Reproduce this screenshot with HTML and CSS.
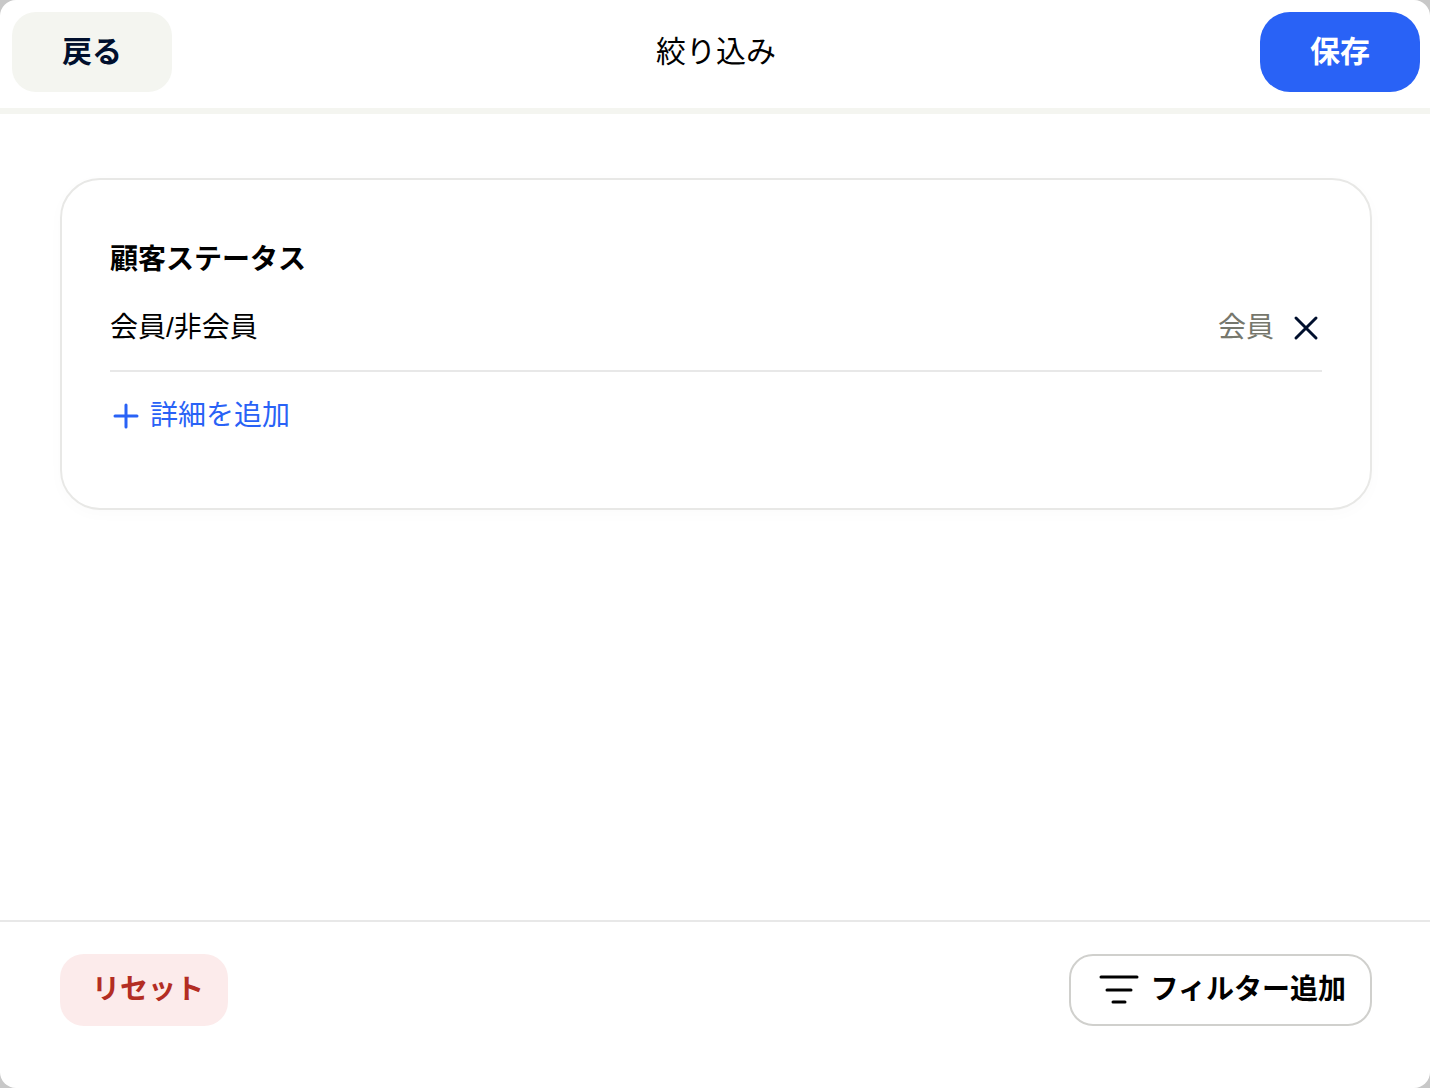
FILE: index.html
```
<!DOCTYPE html>
<html lang="ja">
<head>
  <meta charset="UTF-8">
  <meta name="viewport" content="width=device-width, initial-scale=1.0">
  <title>絞り込み</title>
  <link rel="stylesheet" href="styles.css">
</head>
<body>
  <div class="modal">
    <header class="modal-header">
      <button type="button" class="btn btn-back">戻る</button>
      <h1>絞り込み</h1>
      <button type="button" class="btn btn-save">保存</button>
    </header>

    <main class="modal-body">
      <section class="card">
        <h2>顧客ステータス</h2>
        <div class="filter-row">
          <span class="filter-name">会員/非会員</span>
          <span class="filter-value">会員</span>
          <button type="button" class="btn-remove" aria-label="削除">
            <svg viewBox="0 0 32 32">
              <path d="M6 6L26 26M26 6L6 26"/>
            </svg>
          </button>
        </div>
        <button type="button" class="btn-add">
          <svg viewBox="0 0 32 32">
            <path d="M16 5V27M5 16H27"/>
          </svg>
          詳細を追加
        </button>
      </section>
    </main>

    <footer class="modal-footer">
      <button type="button" class="btn btn-reset">リセット</button>
      <button type="button" class="btn btn-filter">
        <svg viewBox="0 0 40 40">
          <path d="M2 7H38M8 20H32M14 32H26"/>
        </svg>
        フィルター追加
      </button>
    </footer>
  </div>
</body>
</html>
```
FILE: styles.css
```
* {
  margin: 0;
  padding: 0;
  box-sizing: border-box;
}

body {
  font-family: "Liberation Sans", "Noto Sans CJK JP", sans-serif;
  background: #c8c8c8;
  color: #000;
}

button {
  font-family: inherit;
  border: none;
  background: none;
  cursor: pointer;
}

svg {
  fill: none;
  stroke: currentColor;
  stroke-width: 3;
  stroke-linecap: round;
  flex-shrink: 0;
}

.modal {
  display: flex;
  flex-direction: column;
  min-height: 100vh;
  background: #fff;
  border-radius: 16px;
}

/* Header */
.modal-header {
  display: flex;
  align-items: center;
  justify-content: space-between;
  padding: 12px 10px 16px 12px;
  border-bottom: 6px solid #f4f5f0;
}

.modal-header h1 {
  font-size: 30px;
  font-weight: 400;
  line-height: 40px;
}

.btn {
  display: flex;
  align-items: center;
  justify-content: center;
  font-size: 28px;
  font-weight: 700;
  line-height: 40px;
  height: 72px;
  border-radius: 24px;
}

.btn-back,
.btn-save {
  width: 160px;
  height: 80px;
  font-size: 30px;
}

.btn-back {
  background: #f4f5f0;
  color: #000f2d;
}

.btn-save {
  background: #2962f6;
  color: #fff;
  border-radius: 30px;
}

/* Body */
.modal-body {
  flex: 1;
  padding: 64px 58px 64px 60px;
}

.card {
  padding: 60px 48px;
  border: 2px solid #e8e8e6;
  border-radius: 40px;
  box-shadow: 0 4px 16px rgba(0, 0, 0, 0.02);
}

.card h2 {
  font-size: 28px;
  font-weight: 700;
  line-height: 40px;
}

.filter-row {
  display: flex;
  align-items: center;
  padding: 28px 0 22px;
  border-bottom: 2px solid #e8e8e8;
  font-size: 28px;
  line-height: 40px;
}

.filter-name {
  flex: 1;
}

.filter-value {
  color: #76776c;
}

.btn-remove {
  display: flex;
  margin-left: 16px;
  color: #000f2d;
}

.btn-remove svg,
.btn-add svg {
  width: 32px;
  height: 32px;
}

.btn-add {
  display: flex;
  align-items: center;
  gap: 8px;
  padding: 24px 0 12px;
  font-size: 28px;
  line-height: 40px;
  color: #2962f6;
}

/* Footer */
.modal-footer {
  display: flex;
  align-items: center;
  justify-content: space-between;
  padding: 32px 58px 62px 60px;
  border-top: 2px solid #e8e8e8;
}

.btn-reset {
  padding: 0 24px 0 32px;
  background: #fcebeb;
  color: #b32d23;
}

.btn-filter {
  gap: 12px;
  padding: 0 24px 0 28px;
  border: 2px solid #d0d0cd;
  color: #000;
}

.btn-filter svg {
  width: 40px;
  height: 40px;
}
```
